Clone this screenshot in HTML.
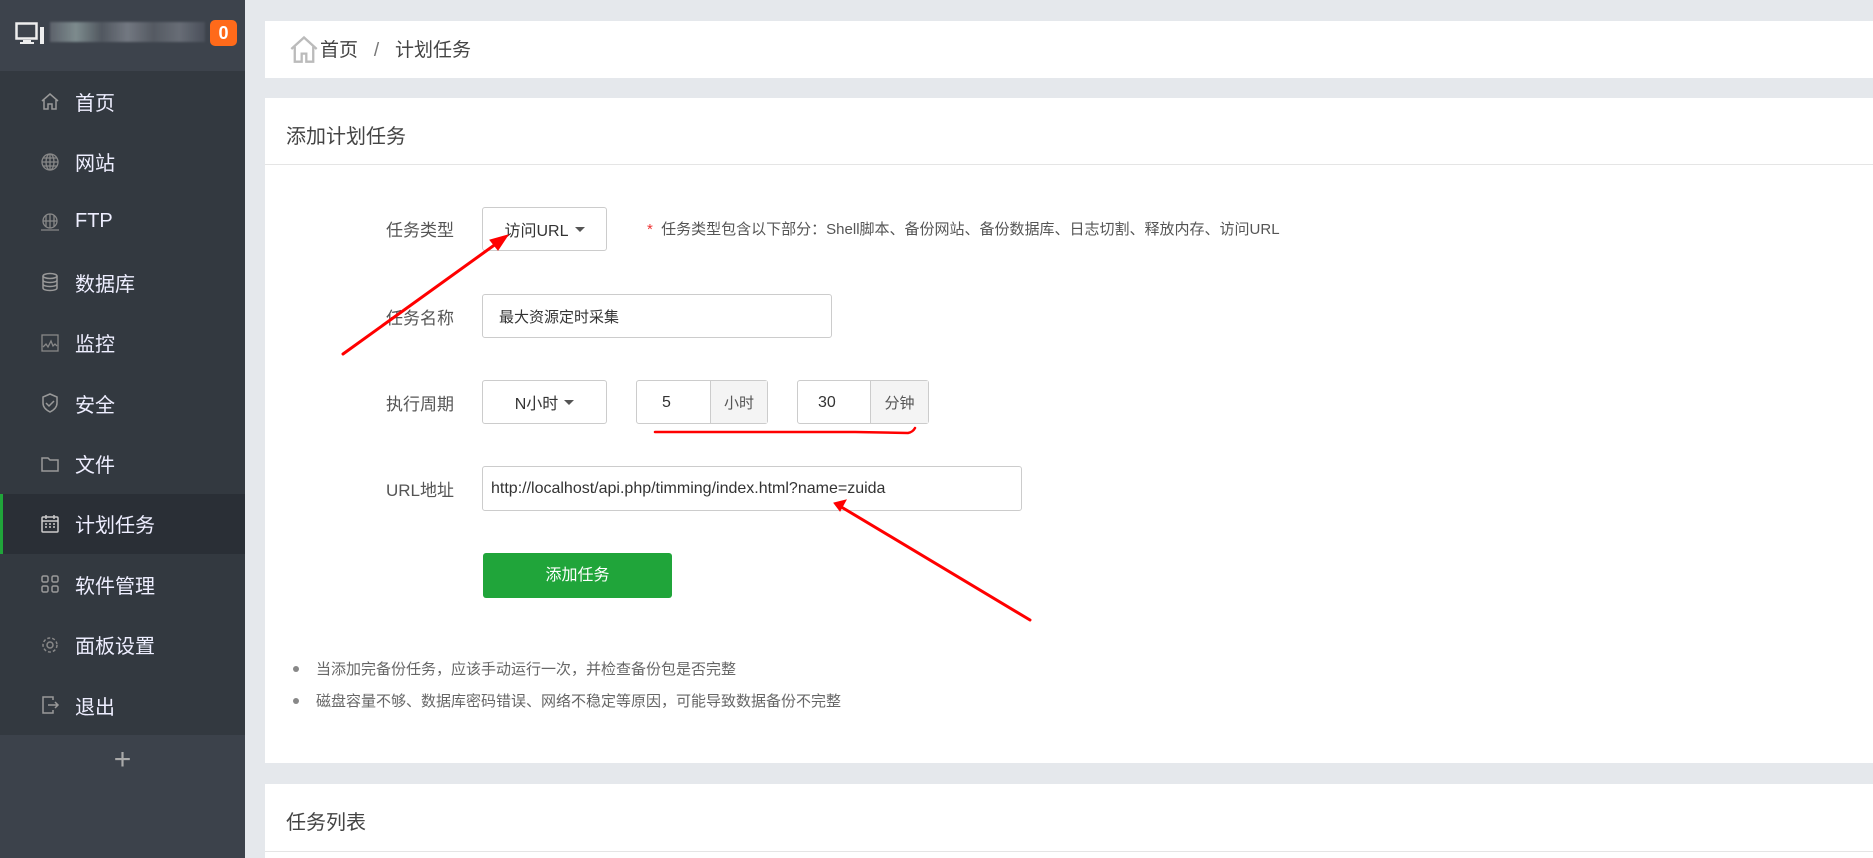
<!DOCTYPE html>
<html><head><meta charset="utf-8"><style>
*{margin:0;padding:0;box-sizing:border-box}
body{width:1873px;height:858px;overflow:hidden;background:#e5e8ec;font-family:"Liberation Sans","Noto Sans CJK SC",sans-serif;position:relative;color:#333}
.sb{position:absolute;left:0;top:0;width:245px;height:858px;background:#3c424b}
.sbh{position:absolute;left:0;top:0;width:245px;height:71px;background:#3d434c}
.menu{position:absolute;left:0;top:71px;width:245px;height:664px;background:#333940}
.it{height:60.4px;display:flex;align-items:center;color:#eef;font-size:20px;position:relative}
.it .ic{width:20px;height:20px;margin-left:40px;margin-right:15px;display:flex;align-items:center;justify-content:center}
.it.act{background:#2a2f36}
.it.act:before{content:"";position:absolute;left:0;top:0;width:3px;height:100%;background:#20a53a}
.card{position:absolute;left:265px;right:0;background:#fff}
.lbl{position:absolute;width:160px;left:294px;text-align:right;font-size:17px;color:#555}
.box{position:absolute;border:1px solid #ccc;border-radius:3px;background:#fff;font-size:16px;color:#333;display:flex;align-items:center}
.caret{display:inline-block;width:0;height:0;border-left:5px solid transparent;border-right:5px solid transparent;border-top:5px solid #555;margin-left:6px}
.addon{position:absolute;top:0;bottom:0;background:#f4f4f4;border-left:1px solid #ccc;display:flex;align-items:center;justify-content:center;font-size:15px;color:#555}
.bul{position:absolute;left:293px;font-size:15px;color:#666}
.bul:before{content:"";position:absolute;left:0;top:8px;width:6px;height:6px;border-radius:50%;background:#888}
.bul span{margin-left:23px}
</style></head><body>
<div class="sb"></div>
<div class="sbh">
<svg style="position:absolute;left:15px;top:22px" width="30" height="24" viewBox="0 0 30 24"><rect x="1.5" y="1.5" width="20" height="15" fill="none" stroke="#eee" stroke-width="2.5"/><rect x="8" y="18" width="8" height="3" fill="#eee"/><rect x="5" y="20" width="14" height="2" fill="#eee"/><rect x="25" y="5" width="4" height="17" fill="#eee"/></svg>
<div style="position:absolute;left:50px;top:22px;width:155px;height:20px;background:linear-gradient(90deg,#6a6f78,#9aa,#5a6068,#8a8f98,#5f646c,#7a7f88,#505560);opacity:.7;filter:blur(1px)"></div>
<div style="position:absolute;left:210px;top:20px;width:27px;height:26px;background:#ff6a1a;border-radius:5px;color:#fff;font-weight:bold;font-size:18px;text-align:center;line-height:26px">0</div>
</div>
<div class="menu">
<div class="it"><span class="ic"><svg width="20" height="20" viewBox="0 0 20 20" fill="none" stroke="#999" stroke-width="1.5"><path d="M2 10 10 3 18 10M4 9v9h4v-5h4v5h4V9"/></svg></span>首页</div>
<div class="it"><span class="ic"><svg width="20" height="20" viewBox="0 0 20 20" fill="none" stroke="#888" stroke-width="1.3"><circle cx="10" cy="10" r="8"/><ellipse cx="10" cy="10" rx="4" ry="8"/><path d="M2 10h16M3 6h14M3 14h14M10 2v16"/></svg></span>网站</div>
<div class="it"><span class="ic"><svg width="20" height="20" viewBox="0 0 20 20" fill="none" stroke="#888" stroke-width="1.3"><circle cx="10" cy="9" r="7"/><path d="M3 9h14M10 2v14M6 3v12M14 3v12M1 18h18"/></svg></span>FTP</div>
<div class="it"><span class="ic"><svg width="20" height="20" viewBox="0 0 20 20" fill="none" stroke="#999" stroke-width="1.5"><ellipse cx="10" cy="4" rx="7" ry="2.5"/><path d="M3 4v12c0 1.5 3 2.5 7 2.5s7-1 7-2.5V4M3 8c0 1.5 3 2.5 7 2.5s7-1 7-2.5M3 12c0 1.5 3 2.5 7 2.5s7-1 7-2.5"/></svg></span>数据库</div>
<div class="it"><span class="ic"><svg width="20" height="20" viewBox="0 0 20 20" fill="none" stroke="#888" stroke-width="1.3"><rect x="2" y="2" width="16" height="16"/><path d="M3 14l3-3 2 3 3-6 2 5 2-2 2 2"/></svg></span>监控</div>
<div class="it"><span class="ic"><svg width="20" height="20" viewBox="0 0 20 20" fill="none" stroke="#999" stroke-width="1.5"><path d="M10 1 17 4v6c0 4-3 7-7 9-4-2-7-5-7-9V4z"/><path d="M6 10l3 3 5-5"/></svg></span>安全</div>
<div class="it"><span class="ic"><svg width="20" height="20" viewBox="0 0 20 20" fill="none" stroke="#999" stroke-width="1.5"><path d="M2 4h6l2 2h8v11H2z"/></svg></span>文件</div>
<div class="it act"><span class="ic"><svg width="20" height="20" viewBox="0 0 20 20" fill="none" stroke="#ccc" stroke-width="1.5"><rect x="2" y="3" width="16" height="15" rx="1"/><path d="M2 7h16M6 1v4M14 1v4M5 10h2M9 10h2M13 10h2M5 13h2M9 13h2M13 13h2"/></svg></span>计划任务</div>
<div class="it"><span class="ic"><svg width="20" height="20" viewBox="0 0 20 20" fill="none" stroke="#999" stroke-width="1.5"><rect x="2" y="2" width="6" height="6" rx="1.5"/><rect x="12" y="2" width="6" height="6" rx="1.5"/><rect x="2" y="12" width="6" height="6" rx="1.5"/><rect x="12" y="12" width="6" height="6" rx="1.5"/></svg></span>软件管理</div>
<div class="it"><span class="ic"><svg width="20" height="20" viewBox="0 0 20 20" fill="none" stroke="#888" stroke-width="1.5"><circle cx="10" cy="10" r="3"/><circle cx="10" cy="10" r="7" stroke-dasharray="3 2"/></svg></span>面板设置</div>
<div class="it"><span class="ic"><svg width="20" height="20" viewBox="0 0 20 20" fill="none" stroke="#999" stroke-width="1.5"><path d="M13 5V2H3v16h10v-3M8 10h10M15 7l3 3-3 3"/></svg></span>退出</div>
</div>
<div style="position:absolute;left:0;width:245px;top:742px;text-align:center;color:#aaa;font-size:30px;line-height:36px">+</div>

<div class="card" style="top:21px;height:57px">
<svg style="position:absolute;left:24px;top:13px" width="30" height="30" viewBox="0 0 26 26" fill="none" stroke="#bbb" stroke-width="2"><path d="M2 13 13 3 24 13M5 11v13h6v-7h4v7h6V11"/></svg>
<div style="position:absolute;left:55px;top:14px;font-size:19px;color:#444">首页&nbsp;&nbsp;&nbsp;<span style="color:#777">/</span>&nbsp;&nbsp;&nbsp;计划任务</div>
</div>

<div class="card" style="top:98px;height:665px">
<div style="position:absolute;left:21px;top:22px;font-size:20px;color:#444">添加计划任务</div>
<div style="position:absolute;left:0;right:0;top:66px;height:1px;background:#e5e5e5"></div>
</div>
<div class="card" style="top:784px;height:74px">
<div style="position:absolute;left:21px;top:22px;font-size:20px;color:#444">任务列表</div>
<div style="position:absolute;left:0;right:0;top:67px;height:1px;background:#e5e5e5"></div>
</div>

<div class="lbl" style="top:216px">任务类型</div>
<div class="box" style="left:482px;top:207px;width:125px;height:44px;justify-content:center">访问URL<span class="caret"></span></div>
<div style="position:absolute;left:647px;top:218px;font-size:15px;color:#555"><span style="color:#e33">*</span>&nbsp;&nbsp;任务类型包含以下部分：Shell脚本、备份网站、备份数据库、日志切割、释放内存、访问URL</div>

<div class="lbl" style="top:304px">任务名称</div>
<div class="box" style="left:482px;top:294px;width:350px;height:44px;padding-left:16px;font-size:15px">最大资源定时采集</div>

<div class="lbl" style="top:390px">执行周期</div>
<div class="box" style="left:482px;top:380px;width:125px;height:44px;justify-content:center">N小时<span class="caret"></span></div>
<div class="box" style="left:636px;top:380px;width:132px;height:44px;padding-left:25px;padding-top:2px">5<div class="addon" style="left:73px;right:0">小时</div></div>
<div class="box" style="left:797px;top:380px;width:132px;height:44px;padding-left:20px;padding-top:2px">30<div class="addon" style="left:72px;right:0">分钟</div></div>

<div class="lbl" style="top:476px">URL地址</div>
<div class="box" style="left:482px;top:466px;width:540px;height:45px;padding-left:8px">http://localhost/api.php/timming/index.html?name=zuida</div>

<div style="position:absolute;left:483px;top:553px;width:189px;height:45px;background:#20a53a;border-radius:3px;color:#fff;font-size:16px;text-align:center;line-height:45px">添加任务</div>

<div class="bul" style="top:658px"><span>当添加完备份任务，应该手动运行一次，并检查备份包是否完整</span></div>
<div class="bul" style="top:690px"><span>磁盘容量不够、数据库密码错误、网络不稳定等原因，可能导致数据备份不完整</span></div>

<svg style="position:absolute;left:0;top:0" width="1873" height="858">
<g stroke="#f00" stroke-width="3" fill="#f00" stroke-linecap="round">
<line x1="343" y1="354" x2="500" y2="241"/><polygon points="508,235 490,240 498,250" stroke-width="1"/>
<line x1="1030" y1="620" x2="843" y2="508"/><polygon points="834,503 846,500 840,511" stroke-width="1"/>
<path d="M655 432 L855 432 L908 433 Q913 432 915 428" fill="none" stroke-width="2.5"/>
</g></svg>
</body></html>
